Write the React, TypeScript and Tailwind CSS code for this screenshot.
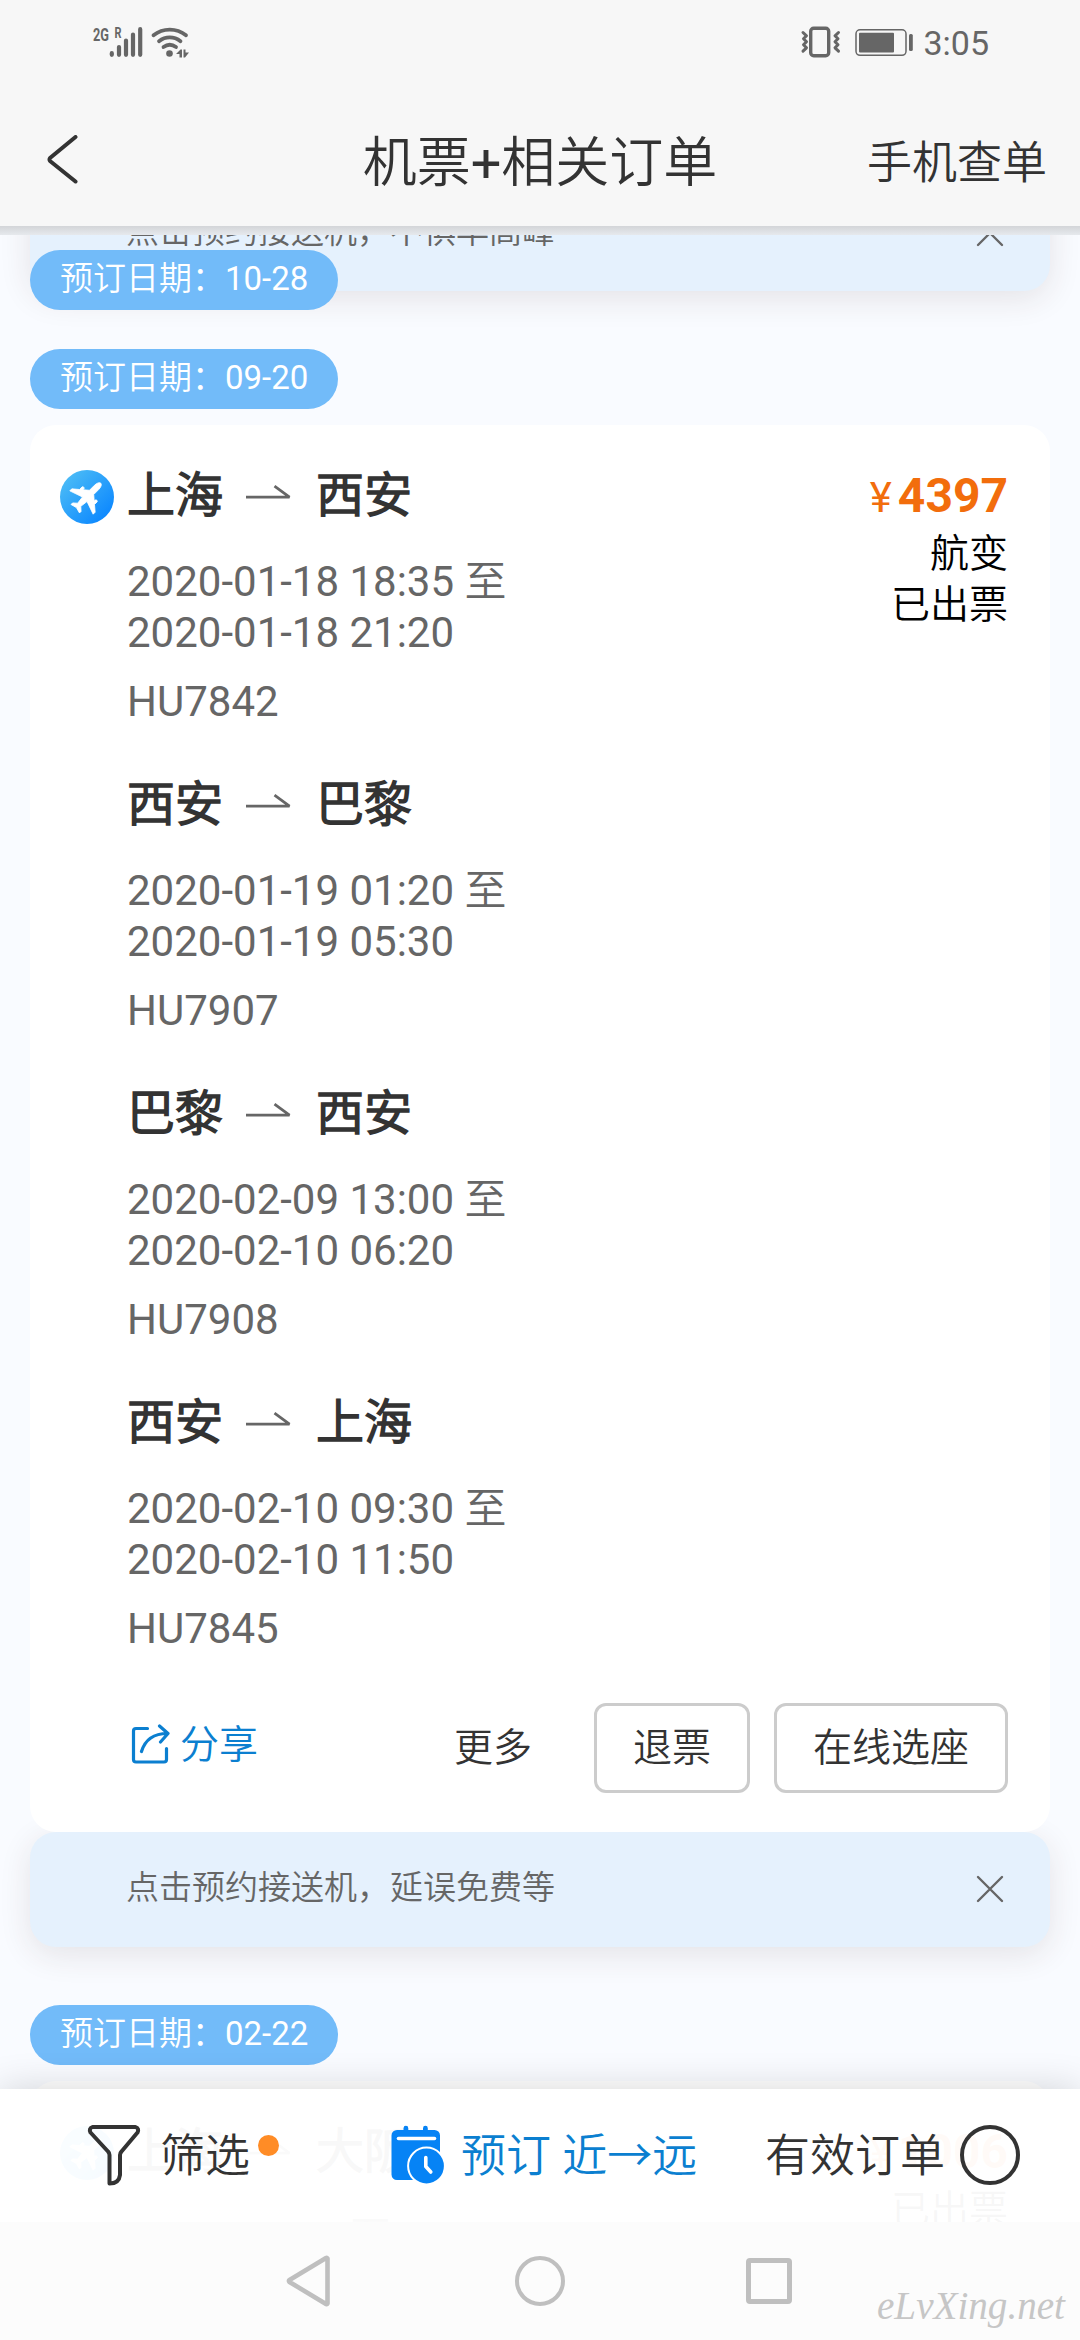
import React from "react";

type Leg = { from: string; to: string; depart: string; arrive: string; flight: string };

const legs: Leg[] = [
  { from: "上海", to: "西安", depart: "2020-01-18 18:35", arrive: "2020-01-18 21:20", flight: "HU7842" },
  { from: "西安", to: "巴黎", depart: "2020-01-19 01:20", arrive: "2020-01-19 05:30", flight: "HU7907" },
  { from: "巴黎", to: "西安", depart: "2020-02-09 13:00", arrive: "2020-02-10 06:20", flight: "HU7908" },
  { from: "西安", to: "上海", depart: "2020-02-10 09:30", arrive: "2020-02-10 11:50", flight: "HU7845" },
];

function StatusBar() {
  return (
    <div className="flex h-[84px] items-start justify-between pr-[91px] pl-[92px] text-[#666]">
      <div className="flex pt-[26px]">
        <svg width="100" height="34" viewBox="0 0 100 34" fill="none" stroke="currentColor">
          <text x="1" y="15" fontSize="19" fontWeight="700" textLength="16" lengthAdjust="spacingAndGlyphs" fill="currentColor" stroke="none" fontFamily="Roboto">2G</text>
          <text x="22.5" y="12" fontSize="14.5" fontWeight="700" textLength="7" lengthAdjust="spacingAndGlyphs" fill="currentColor" stroke="none" fontFamily="Roboto">R</text>
          <g strokeWidth="4.2" strokeLinecap="round">
            <path d="M19.8 27.2v1.6M27 21v7.8M34 14.5v14.3M41 8.5v20.3M48.2 3.2v25.6" />
          </g>
          <g strokeWidth="3.8" strokeLinecap="round">
            <path d="M61.500 9.200c9.500-7.500 23-7.500 32.500 0" />
            <path d="M67 15.200c6.500-5 15-5 21.500 0" />
            <path d="M71.500 21c3.800-2.800 8.700-2.800 12.500 0" />
          </g>
          <circle cx="77.500" cy="27.500" r="3.300" fill="currentColor" stroke="none" />
          <path d="M84 28l4.500-4.500h1.500v8h-2.500v-3.500zM91.500 23.500h2v3h3.500l-4 5h-1.500z" fill="currentColor" stroke="none" />
        </svg>
      </div>
      <div className="flex items-start">
        <svg className="mt-[26px]" width="114" height="34" viewBox="0 0 114 34" fill="none" stroke="currentColor">
          <rect x="10.700" y="2.200" width="18" height="27.600" rx="3" strokeWidth="3.400" />
          <path d="M3 6.500l3.500 3.300-3 3 3 3-3 3 3 3-3.500 3.400" strokeWidth="3" strokeLinecap="round" strokeLinejoin="round" />
          <path d="M38.500 6.500l-3.500 3.300 3 3-3 3 3 3-3 3 3.500 3.400" strokeWidth="3" strokeLinecap="round" strokeLinejoin="round" />
          <rect x="56" y="3.800" width="50" height="25.500" rx="4" strokeWidth="1.500" />
          <rect x="59" y="6.700" width="35" height="19.800" rx="1" fill="currentColor" stroke="none" />
          <rect x="109" y="8" width="3.800" height="17" rx="1.500" fill="currentColor" stroke="none" />
        </svg>
        <span className="mt-[23px] ml-[9px] text-[34px] leading-[40px]">3:05</span>
      </div>
    </div>
  );
}

function Header() {
  return (
    <header className="relative z-20 h-[235px] shrink-0">
      <div className="h-[226px] bg-[#f7f7f7]">
        <StatusBar />
        <div className="grid grid-cols-[1fr_auto_1fr] items-center px-[33px] pt-[38px] text-[#333]">
          <svg className="ml-[13px]" width="34" height="50" viewBox="0 0 34 50" fill="none" stroke="currentColor" strokeWidth="4" strokeLinecap="round" strokeLinejoin="round">
            <path d="M29.500 2L4 23Q3 24.500 4 26L29.500 46.500" />
          </svg>
          <h1 className="pt-[8px] text-[54px] leading-[68px] font-normal">机票+相关订单</h1>
          <span className="justify-self-end pt-[7px] text-[45px] leading-[69px]">手机查单</span>
        </div>
      </div>
      <div className="h-[9px] bg-gradient-to-b from-[#d3d5d8] to-[#e6e9ed]" />
    </header>
  );
}

function DatePill({ date }: { date: string }) {
  return (
    <div className="flex h-[60px] w-[308px] items-center rounded-full bg-[#72bbf9] pb-[3px] pl-[30px] text-[33px] leading-none whitespace-nowrap text-white">
      预订日期：{date}
    </div>
  );
}

function PlaneBadge() {
  return (
    <svg width="54" height="54" viewBox="0 0 54 54">
      <defs>
        <linearGradient id="badge" x1="0" y1="0" x2="1" y2="1">
          <stop offset="0.1" stopColor="#4cbcf6" />
          <stop offset="0.9" stopColor="#0a86ff" />
        </linearGradient>
      </defs>
      <circle cx="27" cy="27" r="27" fill="url(#badge)" />
      <path
        transform="translate(27 27) rotate(45)"
        fill="#fff"
        stroke="#fff"
        strokeWidth="0.800"
        strokeLinejoin="round"
        d="M0-19.500C1.800-19.500 3-16.500 3-13.500V-6.500L8-2.200V-3.600C8-5 10.600-5 10.600-3.600V0L16.500 5V7.800L3.200 3.200L2.200 11L6 14.400V16.600L0 15L-6 16.600V14.400L-2.200 11L-3.200 3.200L-16.500 7.800V5L-10.600 0V-3.600C-10.600-5-8-5-8-3.600V-2.200L-3-6.500V-13.500C-3-16.500-1.800-19.500 0-19.500Z"
      />
    </svg>
  );
}

function RouteArrow() {
  return (
    <svg width="46" height="14" viewBox="0 0 46 14" fill="none" stroke="#666" strokeWidth="2.800">
      <path d="M0 12.200H43.500L28.500 1.200" strokeLinejoin="bevel" />
    </svg>
  );
}

function RouteTitle({ from, to }: { from: string; to: string }) {
  return (
    <div className="flex h-[60px] items-center text-[48px] leading-[60px] font-bold text-[#333]">
      <span className="pt-[3px]">{from}</span>
      <span className="mr-[24px] ml-[23px] pb-[4px]">
        <RouteArrow />
      </span>
      <span className="pt-[3px]">{to}</span>
    </div>
  );
}

function LegBlock({ leg }: { leg: Leg }) {
  return (
    <div className="h-[309px] text-[42px] leading-[51px] text-[#666]">
      <RouteTitle from={leg.from} to={leg.to} />
      <div className="pt-[32px]">{leg.depart} 至</div>
      <div>{leg.arrive}</div>
      <div className="pt-[18px]">{leg.flight}</div>
    </div>
  );
}

function Price({ amount }: { amount: string }) {
  return (
    <div className="flex h-[64px] items-baseline justify-end pt-[2px] text-[#f26d0c]">
      <span className="mr-[6px] text-[42px] leading-[60px]">¥</span>
      <span className="text-[48px] leading-[60px] font-bold">{amount}</span>
    </div>
  );
}

function TransferBanner({ text }: { text: string }) {
  return (
    <div className="flex h-[115px] items-center justify-between rounded-[26px] bg-[#e5f1fd] pr-[46px] pl-[96px] text-[33px] text-[#666] shadow-[0_8px_32px_rgba(60,40,40,0.11)]">
      <span className="pb-[4px] leading-[50px]">{text}</span>
      <svg className="mb-[2px]" width="28" height="28" viewBox="0 0 28 28" stroke="#666" strokeWidth="2.400" strokeLinecap="round">
        <path d="M2 2L26 26M26 2L2 26" />
      </svg>
    </div>
  );
}

function OrderCard() {
  return (
    <article className="relative z-10 h-[1407px] rounded-[26px] bg-white px-[30px] pt-[39px]">
      <div className="flex">
        <div className="w-[67px] pt-[6px]">
          <PlaneBadge />
        </div>
        <div className="flex-1">
          {legs.map((leg) => (
            <LegBlock key={leg.flight} leg={leg} />
          ))}
        </div>
        <div className="w-[200px] pr-[12px] text-right text-[39px] leading-[51px] text-black">
          <Price amount="4397" />
          <div className="pt-[1px]">航变</div>
          <div>已出票</div>
        </div>
      </div>
      <div className="mt-[3px] flex h-[90px] items-center pr-[12px] pl-[69px] text-[39px] leading-none text-[#333]">
        <div className="flex items-center gap-[9px] pb-[6px] text-[#0b7fd0]">
          <svg width="42" height="42" viewBox="0 0 42 42" fill="none" stroke="currentColor" strokeWidth="3.200" strokeLinecap="round" strokeLinejoin="round">
            <path d="M18.500 4.500H7Q4.500 4.500 4.500 7V35.500Q4.500 38 7 38H35Q37.500 38 37.500 35.500V24.500" />
            <path d="M12.500 27.500C16 16 25 9.500 38.500 9.500M30.500 2L39 9.500L31.500 18" />
          </svg>
          <span>分享</span>
        </div>
        <span className="ml-auto">更多</span>
        <button className="ml-[62px] flex h-[90px] w-[156px] items-center justify-center rounded-[12px] border-3 border-[#ccc] leading-none">退票</button>
        <button className="ml-[24px] flex h-[90px] w-[234px] items-center justify-center rounded-[12px] border-3 border-[#ccc] leading-none">在线选座</button>
      </div>
    </article>
  );
}

function NextOrderCard() {
  return (
    <article className="flex h-[300px] rounded-[26px] bg-white px-[30px] pt-[39px]">
      <div className="w-[67px] pt-[6px]">
        <PlaneBadge />
      </div>
      <div className="flex-1 text-[42px] leading-[51px] text-[#666]">
        <RouteTitle from="上海" to="大阪" />
        <div className="pt-[32px]">2020-02-22 至</div>
      </div>
      <div className="w-[200px] pr-[12px] text-right text-[39px] leading-[51px] text-black">
        <Price amount="1006" />
        <div className="pt-[1px]">已出票</div>
      </div>
    </article>
  );
}

function FilterIcon() {
  return (
    <svg width="54" height="62" viewBox="0 0 54 62" fill="none" stroke="#333" strokeWidth="4" strokeLinejoin="round">
      <path d="M5.500 3H48.500Q52.500 4.500 50.500 8.500L34.500 27.500Q33 29 33 31V51Q32 59.500 22.500 59.500V31Q22.500 29 21 27.500L3.500 8.500Q1.500 4.500 5.500 3Z" />
    </svg>
  );
}

function CalendarClockIcon() {
  return (
    <svg width="54" height="60" viewBox="0 0 54 60">
      <path d="M12.500 5V3.200a2.400 2.400 0 0 1 4.800 0V5H32V3.200a2.400 2.400 0 0 1 4.800 0V5H43.500a5.500 5.500 0 0 1 5.500 5.500V40H30V55H6a5.500 5.500 0 0 1-5.500-5.500V10.500A5.500 5.500 0 0 1 6 5Z" fill="#0683f5" />
      <path d="M7.500 13.500H43.500" stroke="#fff" strokeWidth="3.600" strokeLinecap="round" />
      <circle cx="35.500" cy="41" r="18.400" fill="#0683f5" stroke="#fff" strokeWidth="2" />
      <path d="M34.800 32.500V41.500L39.800 47" stroke="#fff" strokeWidth="3.600" strokeLinecap="round" strokeLinejoin="round" fill="none" />
    </svg>
  );
}

function ActionBar() {
  return (
    <div className="absolute inset-x-0 bottom-[118px] z-20 flex h-[133px] items-center bg-white/97 pb-[1px] text-[45px] leading-none text-[#333] shadow-[0_0_36px_rgba(0,0,0,0.16)]">
      <div className="ml-[87px] flex items-center">
        <FilterIcon />
        <span className="ml-[19px] pt-[2px]">筛选</span>
        <span className="mb-[20px] ml-[8px] h-[21px] w-[21px] rounded-full bg-[#ff8c26]" />
      </div>
      <div className="ml-[112px] flex items-center text-[#0b7fd0]">
        <CalendarClockIcon />
        <span className="ml-[16px] pt-[2px]">预订 近→远</span>
      </div>
      <div className="mr-[60px] ml-auto flex items-center">
        <span className="pt-[2px]">有效订单</span>
        <span className="ml-[15px] h-[60px] w-[60px] rounded-full border-4 border-[#333]" />
      </div>
    </div>
  );
}

function NavigationBar() {
  return (
    <nav className="relative z-30 mt-auto grid h-[118px] shrink-0 grid-cols-[290px_500px_290px] bg-[#fcfcfc]">
      <div />
      <div className="flex items-center justify-between text-[#bfbfbf]">
        <svg className="-ml-[5px]" width="48" height="54" viewBox="0 0 48 54" fill="none" stroke="currentColor" strokeWidth="4.600" strokeLinejoin="round">
          <path d="M42.500 4.500V49.500Q42 50.500 41 50L4.500 28Q3.500 27 4.500 26L41 4Q42 3.500 42.500 4.500Z" />
        </svg>
        <span className="h-[50px] w-[50px] rounded-full border-[4.500px] border-current" />
        <span className="-mr-[2px] h-[46px] w-[46px] rounded-[4px] border-[5px] border-current" />
      </div>
      <div className="flex items-end pb-[2px] pl-[85px]">
        <svg width="200" height="56" viewBox="0 0 200 56">
          <text x="2" y="37" fontSize="40" fontStyle="italic" fontFamily="Liberation Serif" fill="#c6c6c6" textLength="188" lengthAdjust="spacingAndGlyphs">eLvXing.net</text>
        </svg>
      </div>
    </nav>
  );
}

export default function App() {
  return (
    <div className="relative flex h-[2340px] w-[1080px] flex-col overflow-hidden bg-[#f9fbff] font-[Roboto,'Noto_Sans_CJK_SC_DemiLight','Noto_Sans_CJK_SC',sans-serif]">
      <Header />
      <main className="-mt-[59px] px-[30px]">
        <TransferBanner text="点击预约接送机，不惧早高峰" />
        <div className="relative z-10 -mt-[41px]">
          <DatePill date="10-28" />
        </div>
        <div className="mt-[39px]">
          <DatePill date="09-20" />
        </div>
        <div className="mt-[16px]">
          <OrderCard />
          <TransferBanner text="点击预约接送机，延误免费等" />
        </div>
        <div className="mt-[58px] mb-[16px]">
          <DatePill date="02-22" />
        </div>
        <div className="h-[141px] overflow-hidden">
          <NextOrderCard />
        </div>
      </main>
      <ActionBar />
      <NavigationBar />
    </div>
  );
}
